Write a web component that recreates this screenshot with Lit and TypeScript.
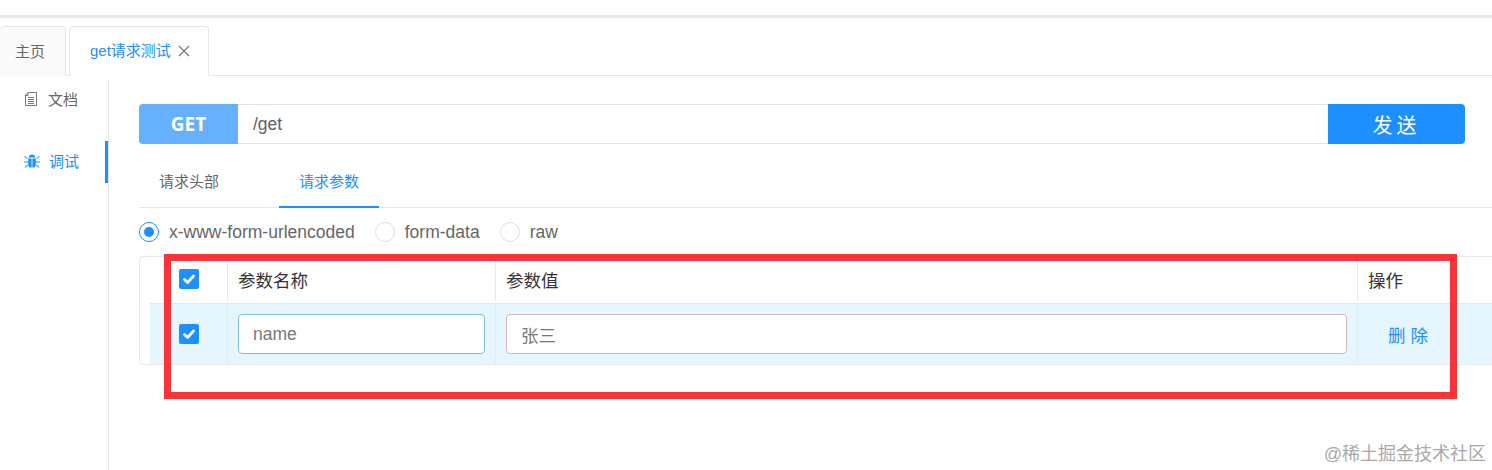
import { LitElement, css, html } from "lit";
import { customElement } from "lit/decorators.js";

const docIcon = html`<svg class="ico" viewBox="0 0 14 16" width="14" height="16" fill="none" stroke="#777" stroke-width="1">
  <path d="M4 1.500h8.500v13h-11v-10.500z" /><path d="M1.500 4.500h2.500v-3" /><path d="M4 6.500h6M4 8.500h6M4 10.500h6M4 12.500h6" />
</svg>`;

const bugIcon = html`<svg class="ico" viewBox="0 0 16 16" width="16" height="16" fill="#1e8fff">
  <path d="M4.800 4.600a3.200 3.200 0 0 1 6.400 0z" />
  <path d="M4.200 5.400h3.400v9.400c-2-.2-3.400-1.300-3.400-3.400zM8.400 5.400h3.400v6c0 2.100-1.400 3.200-3.400 3.400z" />
  <path d="M1 2.800l3 2.600-.6.700-3-2.600zM15 2.800l-3 2.600.6.700 3-2.600zM0 8.500h4v1H0zM12 8.500h4v1h-4zM3.400 11.700l.6.700-2.800 2.400-.6-.7zM12.600 11.700l-.6.700 2.800 2.400.6-.7z" />
</svg>`;

const check = html`<svg viewBox="0 0 20 20" width="20" height="20" fill="none" stroke="#fff" stroke-width="2.800" stroke-linecap="round" stroke-linejoin="round">
  <path d="M5.500 10.500l3.100 3 5.900-6.500" />
</svg>`;

@customElement("app-root")
export class AppRoot extends LitElement {
  static styles = css`
    :host {
      display: block;
      position: relative;
      width: 1492px;
      height: 470px;
      overflow: hidden;
      background: #fff;
      font-family: "Liberation Sans", "Noto Sans CJK SC", sans-serif;
      color: #666;
    }
    .topline {
      height: 3px;
      margin-top: 15px;
      background: #e8e8e8;
    }
    .tabs {
      display: flex;
      gap: 3px;
      height: 50px;
      margin-top: 8px;
      border-bottom: 1px solid #e4e7ed;
      box-sizing: border-box;
    }
    .tab {
      display: flex;
      align-items: center;
      box-sizing: border-box;
      height: 50px;
      padding-bottom: 3px;
      font-size: 15px;
      border: 1px solid #e4e7ed;
      border-radius: 4px 4px 0 0;
    }
    .tab.home {
      width: 66px;
      padding-left: 15px;
      background: #fafafa;
      border-left: 0;
      border-bottom: 0;
    }
    .tab.cur {
      width: 140px;
      padding-left: 20px;
      color: #1e8fff;
      border-bottom-color: #fff;
    }
    .close {
      margin-left: 7px;
      margin-top: 3px;
    }
    .body {
      display: flex;
      height: 394px;
    }
    .side {
      flex: none;
      width: 109px;
      box-sizing: border-box;
      border-right: 1px solid #e6e6e6;
      margin-top: 4px;
    }
    .side-item {
      display: flex;
      align-items: center;
      position: relative;
      box-sizing: border-box;
      height: 42px;
      padding-left: 24px;
      padding-bottom: 3px;
      gap: 10px;
      font-size: 15px;
    }
    .side-item.doc {
      margin-top: -1px;
    }
    .side-item.dbg {
      margin-top: 20px;
      color: #1e8fff;
      border-right: 3px solid #1e8fff;
      gap: 9px;
    }
    .ico {
      flex: none;
    }
    .main {
      flex: 1;
      min-width: 0;
      padding: 28px 0 0 30px;
    }
    .url {
      display: flex;
      height: 40px;
      width: 1326px;
    }
    .method {
      flex: none;
      width: 99px;
      display: flex;
      align-items: center;
      justify-content: center;
      background: #66b1ff;
      color: #fff;
      font: 700 19px "Open Sans", sans-serif;
      border-radius: 4px 0 0 4px;
    }
    .path {
      flex: 1;
      display: flex;
      align-items: center;
      padding-left: 15px;
      font-size: 17.500px;
      color: #606266;
      border-top: 1px solid #dcdfe6;
      border-bottom: 1px solid #dcdfe6;
    }
    .send {
      flex: none;
      width: 137px;
      display: flex;
      align-items: center;
      justify-content: center;
      background: #1e8fff;
      color: #fff;
      font-size: 20px;
      letter-spacing: 4px;
      border-radius: 0 4px 4px 0;
    }
    .subtabs {
      display: flex;
      gap: 40px;
      height: 64px;
      box-sizing: border-box;
      border-bottom: 1px solid #e4e7ed;
    }
    .subtab {
      width: 100px;
      height: 64px;
      box-sizing: border-box;
      padding-top: 28px;
      text-align: center;
      font-size: 15px;
      line-height: 20px;
      color: #666;
    }
    .subtab.on {
      color: #1e8fff;
      border-bottom: 2px solid #1e8fff;
    }
    .radios {
      display: flex;
      align-items: center;
      height: 48px;
      font-size: 17.500px;
      color: #666;
    }
    .radio {
      display: flex;
      align-items: center;
      gap: 10px;
      margin-right: 20px;
    }
    .dot {
      width: 20px;
      height: 20px;
      box-sizing: border-box;
      border: 1px solid #dcdfe6;
      border-radius: 50%;
      background: #fff;
    }
    .dot.on {
      border-color: #1e8fff;
      display: flex;
      align-items: center;
      justify-content: center;
    }
    .dot.on::after {
      content: "";
      width: 10px;
      height: 10px;
      border-radius: 50%;
      background: #1e8fff;
    }
    .table {
      box-sizing: border-box;
      height: 109px;
      margin-right: -2px;
      border: 1px solid #e8e8e8;
      border-radius: 4px 0 0 4px;
      padding-left: 10px;
    }
    .row {
      display: grid;
      grid-template-columns: 78px 268px 862px 1fr;
    }
    .row.head {
      height: 47px;
      padding-bottom: 2px;
      box-sizing: border-box;
      border-bottom: 1px solid #e8e8e8;
      font-size: 17.500px;
      color: #333;
    }
    .row.item {
      height: 60px;
      background: #e6f6fe;
    }
    .cell {
      display: flex;
      align-items: center;
      box-sizing: border-box;
      padding: 0 10px;
      border-right: 1px solid #e8e8e8;
    }
    .cell:last-child {
      border-right: 0;
    }
    .cell.chk {
      padding: 0 0 0 29px;
    }
    .box {
      width: 20px;
      height: 20px;
      border-radius: 2px;
      background: #1e8fff;
    }
    .field {
      display: flex;
      align-items: center;
      box-sizing: border-box;
      width: 100%;
      height: 40px;
      padding-left: 14px;
      background: #fff;
      border: 1px solid #7cbcf0;
      border-radius: 4px;
      font-size: 17.500px;
      color: #777;
    }
    .field.val {
      border-color: #d5b8bc;
    }
    .del {
      padding-left: 30px;
      font-size: 17.500px;
      letter-spacing: 5px;
      color: #1e8fff;
    }
    .redbox {
      position: absolute;
      left: 164px;
      top: 254px;
      width: 1293px;
      height: 145px;
      box-sizing: border-box;
      border: 7px solid #fb3338;
    }
    .mark {
      position: absolute;
      right: 6px;
      top: 443px;
      font-size: 18px;
      line-height: 22px;
      color: #a9a9a9;
    }
  `;

  render() {
    return html`
      <div class="topline"></div>
      <div class="tabs">
        <div class="tab home">主页</div>
        <div class="tab cur">
          get请求测试
          <svg class="close" viewBox="0 0 12 12" width="12" height="12" stroke="#777" stroke-width="1.200"><path d="M1 1l10 10M11 1L1 11" /></svg>
        </div>
      </div>
      <div class="body">
        <div class="side">
          <div class="side-item doc">${docIcon}文档</div>
          <div class="side-item dbg">${bugIcon}调试</div>
        </div>
        <div class="main">
          <div class="url">
            <div class="method">GET</div>
            <div class="path">/get</div>
            <div class="send">发送</div>
          </div>
          <div class="subtabs">
            <div class="subtab">请求头部</div>
            <div class="subtab on">请求参数</div>
          </div>
          <div class="radios">
            <label class="radio"><span class="dot on"></span>x-www-form-urlencoded</label>
            <label class="radio"><span class="dot"></span>form-data</label>
            <label class="radio"><span class="dot"></span>raw</label>
          </div>
          <div class="table">
            <div class="row head">
              <div class="cell chk"><div class="box">${check}</div></div>
              <div class="cell">参数名称</div>
              <div class="cell">参数值</div>
              <div class="cell">操作</div>
            </div>
            <div class="row item">
              <div class="cell chk"><div class="box">${check}</div></div>
              <div class="cell"><div class="field">name</div></div>
              <div class="cell"><div class="field val">张三</div></div>
              <div class="cell del">删除</div>
            </div>
          </div>
        </div>
      </div>
      <div class="redbox"></div>
      <div class="mark">@稀土掘金技术社区</div>
    `;
  }
}
